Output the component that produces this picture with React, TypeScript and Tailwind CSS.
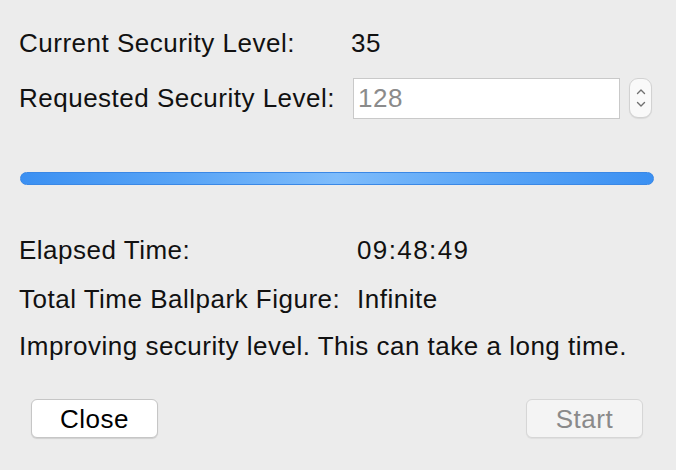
import React from "react";

export default function App() {
  return (
    <div
      className="w-[676px] h-[470px] bg-[#ececec] text-[#111] overflow-hidden"
      style={{ fontFamily: '"Liberation Sans", Arial, sans-serif' }}
    >
      <div className="flex flex-col pl-[19px] pr-[22px] pt-[21px] text-[26px] tracking-[0.5px]">
        <div className="flex items-center h-[44px]">
          <span className="w-[332px] shrink-0 whitespace-nowrap">Current Security Level:</span>
          <span>35</span>
        </div>
        <div className="flex items-center h-[42px] mt-[12px]">
          <span className="w-[334px] shrink-0 whitespace-nowrap">Requested Security Level:</span>
          <div className="w-[267px] h-[41px] bg-white border border-[#c9c9c9] flex items-center pl-[4px] text-[#8b8b8b]">
            128
          </div>
          <div className="ml-[9px] w-[23px] h-[40px] rounded-[9px] bg-[#f9f9f9] border border-[#d2d2d2] flex flex-col items-center justify-center gap-[6px] shadow-[0_1px_1px_rgba(0,0,0,0.08)]">
            <svg width="10" height="7" viewBox="0 0 10 7">
              <path d="M1.5 5.5 L5 2 L8.5 5.5" fill="none" stroke="#707070" strokeWidth="1.4" strokeLinecap="round" strokeLinejoin="round" />
            </svg>
            <svg width="10" height="7" viewBox="0 0 10 7">
              <path d="M1.5 1.5 L5 5 L8.5 1.5" fill="none" stroke="#707070" strokeWidth="1.4" strokeLinecap="round" strokeLinejoin="round" />
            </svg>
          </div>
        </div>
        <div className="mt-[53px] ml-[1px] w-[634px] h-[13px] rounded-full border border-[#3a88e6] bg-[linear-gradient(90deg,#3b90f2_0%,#58a4f6_25%,#7ebcfb_50%,#58a4f6_75%,#3b90f2_100%)]" />
        <div className="flex items-center h-[30px] mt-[50px]">
          <span className="w-[338px] shrink-0 whitespace-nowrap">Elapsed Time:</span>
          <span className="tracking-[1.4px]">09:48:49</span>
        </div>
        <div className="flex items-center h-[30px] mt-[19px]">
          <span className="w-[338px] shrink-0 whitespace-nowrap">Total Time Ballpark Figure:</span>
          <span>Infinite</span>
        </div>
        <div className="flex items-center h-[30px] mt-[17px] whitespace-nowrap">
          <span>Improving security level. This can take a long time.</span>
        </div>
        <div className="flex justify-between items-center mt-[38px] pl-[12px] pr-[11px]">
          <button className="w-[127px] h-[39px] bg-white border border-[#c6c6c6] rounded-[6px] shadow-[0_1px_1px_rgba(0,0,0,0.12)] text-[#000] text-[26px] tracking-[0.5px]">
            Close
          </button>
          <button className="w-[117px] h-[39px] bg-[#f4f4f4] border border-[#d6d6d6] rounded-[6px] shadow-[0_1px_1px_rgba(0,0,0,0.06)] text-[#8a8a8a] text-[26px] tracking-[0.5px]">
            Start
          </button>
        </div>
      </div>
    </div>
  );
}
